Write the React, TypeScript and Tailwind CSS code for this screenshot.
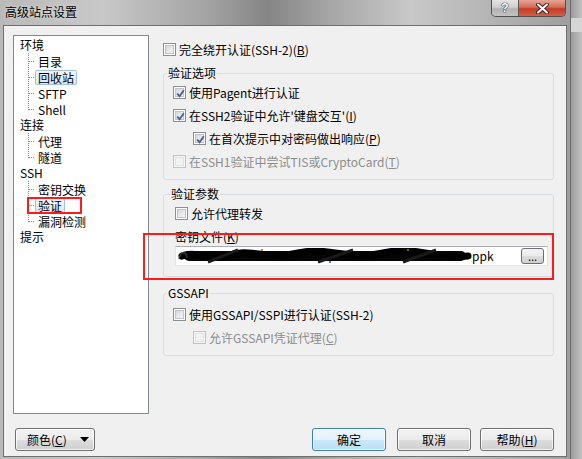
import React from "react";

type Node = { label: string; sel?: boolean };

const tree: { label: string; children: Node[] }[] = [
  { label: "环境", children: [{ label: "目录" }, { label: "回收站", sel: true }, { label: "SFTP" }, { label: "Shell" }] },
  { label: "连接", children: [{ label: "代理" }, { label: "隧道" }] },
  { label: "SSH", children: [{ label: "密钥交换" }, { label: "验证", sel: true }, { label: "漏洞检测" }] },
  { label: "提示", children: [] },
];

// dotted connector of the tree view
const Conn = ({ last }: { last: boolean }) => (
  <svg width="15" height="16" className="shrink-0">
    <line x1="8.5" y1="0" x2="8.5" y2={last ? 9 : 16} stroke="#8a8a8a" strokeDasharray="1 1" />
    <line x1="9" y1="8.5" x2="15" y2="8.5" stroke="#8a8a8a" strokeDasharray="1 1" />
  </svg>
);

const Check = ({ checked, disabled }: { checked?: boolean; disabled?: boolean }) => (
  <span
    className={`relative flex h-[13px] w-[13px] shrink-0 items-center justify-center border ${
      disabled ? "border-[#c3c3c3] bg-[#f6f6f6]" : "border-[#8e8f8f] bg-white"
    }`}
  >
    <span
      className={`h-[9px] w-[9px] border ${
        disabled
          ? "border-[#e2e2e2] bg-[#f3f3f3]"
          : "border-[#c0c4ca] bg-[linear-gradient(135deg,#d3d6db,#f8f8f8)]"
      }`}
    />
    {checked && (
      <svg className="absolute left-[1px] top-[1px]" width="11" height="11" viewBox="0 0 11 11">
        <path d="M2.2 5.6 L4.6 8.2 L8.8 2.2" fill="none" stroke="#4b5f92" strokeWidth="1.9" />
      </svg>
    )}
  </span>
);

const CheckRow = ({
  children,
  checked,
  disabled,
  indent,
}: {
  children: React.ReactNode;
  checked?: boolean;
  disabled?: boolean;
  indent?: boolean;
}) => (
  <div className={`flex h-[23px] items-center gap-[3px] ${indent ? "pl-[20px]" : ""}`}>
    <Check checked={checked} disabled={disabled} />
    <span className={disabled ? "text-[#8d8d8d]" : "text-black"}>{children}</span>
  </div>
);

const Key = ({ k }: { k: string }) => (
  <>
    (<span className="underline underline-offset-[1px]">{k}</span>)
  </>
);

const Button = ({ children, primary, className = "" }: { children: React.ReactNode; primary?: boolean; className?: string }) => (
  <div
    className={`flex h-[23px] items-center justify-center rounded-[3px] border shadow-[inset_0_0_0_1px_rgba(255,255,255,0.75)] ${
      primary
        ? "border-[#3c7fb1] bg-[linear-gradient(to_bottom,#eef7fd_0%,#e1f2fc_50%,#cbe8f8_51%,#b9dff4_100%)]"
        : "border-[#707070] bg-[linear-gradient(to_bottom,#f3f3f3_0%,#ebebeb_50%,#dddddd_51%,#cfcfcf_100%)]"
    } ${className}`}
  >
    {children}
  </div>
);

export default function App() {
  return (
    <div className="relative flex h-[459px] w-[582px] overflow-hidden font-['Noto_Sans_CJK_SC',sans-serif] text-[12px] leading-[16px] text-black">
      {/* dialog window */}
      <div className="flex h-full w-[570px] flex-col bg-[linear-gradient(to_right,#b9b9b9_0%,#c8c8c8_18%,#a4a4a4_36%,#858585_47%,#a6a6a6_58%,#c8c8c8_72%,#b4b4b4_86%,#9e9e9e_100%)]">
        {/* title bar */}
        <div className="flex h-[25px] items-start">
          <span className="ml-[5px] mt-[4px] [text-shadow:0_0_4px_rgba(255,255,255,0.7)]">高级站点设置</span>
          <div className="ml-auto mr-[4px] flex h-[17px] overflow-hidden rounded-b-[5px] border border-t-0 border-[#4f4f4f]">
            <div className="flex w-[27px] items-center justify-center border-r border-[#5a5a5a] bg-[linear-gradient(to_bottom,#e4e4e4_0%,#cfcfcf_45%,#b3b3b3_55%,#c2c2c2_100%)]">
              <span className="font-['Liberation_Sans',sans-serif] text-[12px] font-bold leading-none text-white [text-shadow:0_0_1px_#2d2d2d,0_0_1px_#2d2d2d,0_0_1px_#2d2d2d]">
                ?
              </span>
            </div>
            <div className="flex w-[46px] items-center justify-center bg-[linear-gradient(to_bottom,#e7a596_0%,#d56d58_45%,#c33b25_55%,#d45e45_100%)]">
              <svg width="13" height="11" viewBox="0 0 13 11">
                <path d="M2 1.5 L11 9.5 M11 1.5 L2 9.5" stroke="#3b2a2a" strokeWidth="4" strokeLinecap="round" />
                <path d="M2 1.5 L11 9.5 M11 1.5 L2 9.5" stroke="#ffffff" strokeWidth="2" strokeLinecap="round" />
              </svg>
            </div>
          </div>
        </div>

        {/* client area */}
        <div className="mx-[3px] mb-[2px] flex flex-1 flex-col border border-[#6f6f6f] bg-[#f0f0f0]">
          <div className="flex pl-[9px] pt-[9px]">
            {/* tree view */}
            <div className="h-[379px] w-[136px] border border-[#828790] bg-white pl-[6px] pt-[1px]">
              {tree.map((n) => (
                <div key={n.label}>
                  <div className="h-[16px] whitespace-nowrap">{n.label}</div>
                  {n.children.map((c, i) => (
                    <div key={c.label} className="flex h-[16px] items-center">
                      <Conn last={i === n.children.length - 1} />
                      <span
                        className={`h-[15px] whitespace-nowrap rounded-[2px] border px-[2px] leading-[13px] ${
                          c.sel
                            ? "border-[#9fc0e6] bg-[linear-gradient(to_bottom,#f3f8fe,#dbe8f8)]"
                            : "border-transparent"
                        }`}
                      >
                        {c.label}
                      </span>
                    </div>
                  ))}
                </div>
              ))}
            </div>

            {/* settings */}
            <div className="ml-[14px] w-[391px]">
              <div className="mt-[3px]">
                <CheckRow>
                  完全绕开认证(SSH-2)<Key k="B" />
                </CheckRow>
              </div>

              <fieldset className="mt-[4px] rounded-[3px] border border-[#d5dfe5] pb-[6px]">
                <legend className="ml-[3px] px-[1px]">验证选项</legend>
                <div className="pl-[9px]">
                  <CheckRow checked>使用Pagent进行认证</CheckRow>
                  <CheckRow checked>
                    在SSH2验证中允许'键盘交互'<Key k="I" />
                  </CheckRow>
                  <CheckRow checked indent>
                    在首次提示中对密码做出响应<Key k="P" />
                  </CheckRow>
                  <CheckRow disabled>
                    在SSH1验证中尝试TIS或CryptoCard<Key k="T" />
                  </CheckRow>
                </div>
              </fieldset>

              <fieldset className="mt-[6px] rounded-[3px] border border-[#d5dfe5] pb-[10px]">
                <legend className="ml-[6px] px-[1px]">验证参数</legend>
                <div className="pl-[11px] pr-[5px]">
                  <CheckRow>允许代理转发</CheckRow>
                  <div className="mt-[4px] h-[16px]">
                    密钥文件<Key k="K" />
                  </div>
                  <div className="mt-[1px] flex h-[20px] items-center border border-[#abadb3] border-b-[#e3e9ef] border-l-[#e2e3ea] border-r-[#dbdfe6] bg-white pl-[2px] pr-[3px]">
                    {/* redacted path scribble */}
                    <svg width="294" height="16" viewBox="0 0 294 16" className="shrink-0">
                      <rect x="6" y="3" width="282" height="10" rx="5" fill="#050505" />
                      <path d="M4 8 C 18 2, 34 14, 52 7 S 90 12, 120 5 S 170 13, 205 5 S 255 12, 290 8" fill="none" stroke="#000" strokeWidth="7" strokeLinecap="round" />
                      <path d="M30 14 L60 2 M140 14 L175 2 M225 14 L258 2" stroke="#1a1a1a" strokeWidth="3" />
                      <path d="M1 11 C 3 3, 8 3, 9 10" fill="none" stroke="#333" strokeWidth="1.5" />
                      <circle cx="84" cy="2" r="1" fill="#c05a20" />
                      <circle cx="152" cy="14" r="1" fill="#2050b0" />
                      <circle cx="230" cy="2" r="1" fill="#b08020" />
                    </svg>
                    <span>ppk</span>
                    <div className="ml-auto flex h-[16px] w-[23px] items-end justify-center rounded-[3px] border border-[#707070] bg-[linear-gradient(to_bottom,#f3f3f3_0%,#ebebeb_50%,#dddddd_51%,#cfcfcf_100%)] pb-[1px] text-[11px] leading-[11px]">
                      ...
                    </div>
                  </div>
                </div>
              </fieldset>

              <fieldset className="mt-[8px] rounded-[3px] border border-[#d5dfe5] pb-[6px]">
                <legend className="ml-[3px] px-[1px]">GSSAPI</legend>
                <div className="mt-[2px] pl-[9px]">
                  <CheckRow>使用GSSAPI/SSPI进行认证(SSH-2)</CheckRow>
                  <CheckRow disabled indent>
                    允许GSSAPI凭证代理<Key k="C" />
                  </CheckRow>
                </div>
              </fieldset>
            </div>
          </div>

          {/* buttons */}
          <div className="mt-[14px] flex items-center pl-[11px] pr-[12px]">
            <Button className="w-[80px] justify-start pl-[11px]">
              <span>
                颜色<Key k="C" />
              </span>
              <svg width="9" height="5" viewBox="0 0 9 5" className="ml-[13px]">
                <path d="M0 0 H9 L4.5 5 Z" fill="#000" />
              </svg>
            </Button>
            <Button primary className="ml-auto w-[74px]">
              确定
            </Button>
            <Button className="ml-[11px] w-[74px]">取消</Button>
            <Button className="ml-[9px] w-[74px]">
              帮助<Key k="H" />
            </Button>
          </div>
        </div>
      </div>

      {/* window behind */}
      <div className="flex w-[12px] flex-col border-l border-[#6a6a6a] bg-[linear-gradient(to_right,#9c9c9c,#c2c2c2)]">
        <div className="mt-[18px] h-[14px] w-full bg-[#d6d6d6]" />
      </div>

      {/* red annotation boxes */}
      <div className="absolute left-[27px] top-[197px] h-[17px] w-[55px] border-2 border-solid border-[#ff1a1a]" />
      <div className="absolute left-[143px] top-[233px] h-[47px] w-[411px] border-2 border-solid border-[#ff1a1a]" />
    </div>
  );
}
